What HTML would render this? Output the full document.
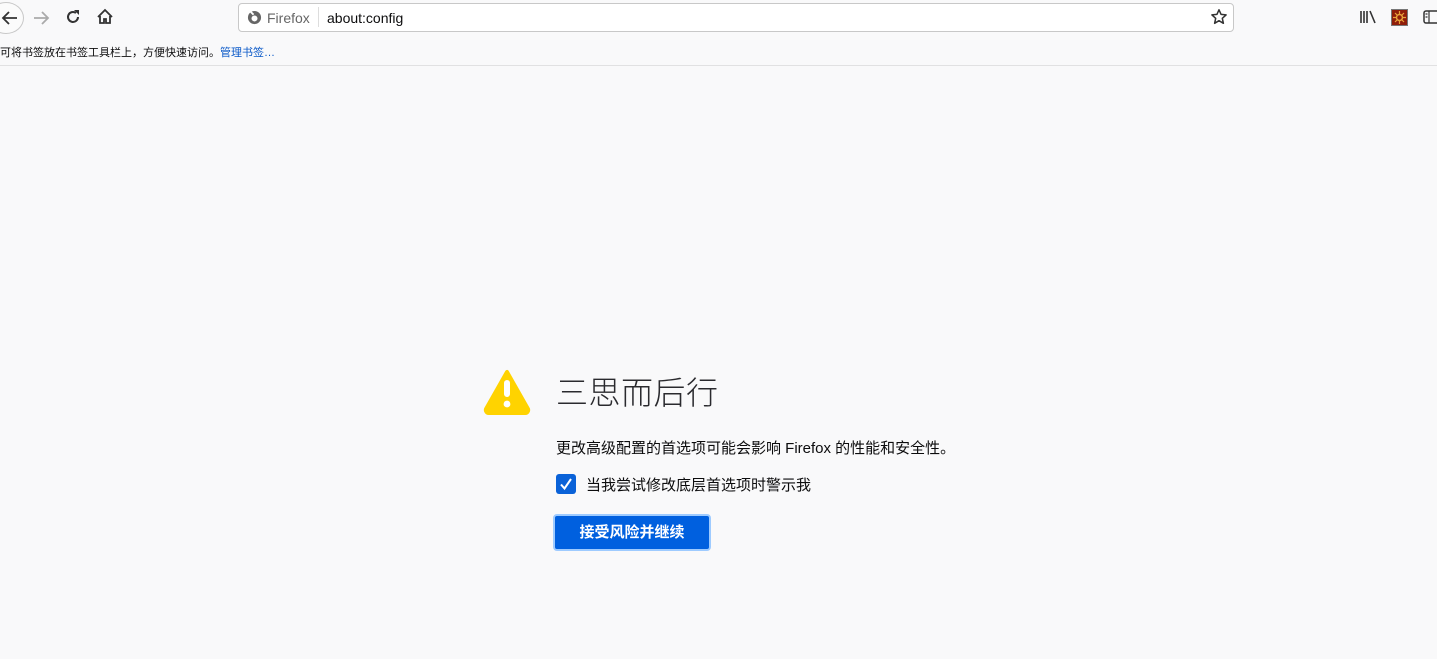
<!DOCTYPE html>
<html><head><meta charset="utf-8"><style>
body{margin:0;width:1437px;height:659px;background:#f9f9fa;font-family:"Liberation Sans","Noto Sans CJK SC",sans-serif;position:relative;overflow:hidden;color:#0c0c0d}
.a{position:absolute}
</style></head><body>
<div class="a" style="left:0;top:0;width:1437px;height:65px;background:#f9f9fa;border-bottom:1px solid #e1e1e2"></div>
<div class="a" style="left:-12px;top:2px;width:34px;height:30px;border:1px solid #c8c8c8;border-radius:50%;background:#fbfbfb"></div>
<svg class="a" style="left:0;top:8px" width="20" height="20" viewBox="0 0 20 20"><path d="M17 10H3M9 4L3 10l6 6" fill="none" stroke="#333" stroke-width="1.8"/></svg>
<svg class="a" style="left:32px;top:8px" width="20" height="20" viewBox="0 0 20 20"><path d="M2 10h14M10 4l6 6-6 6" fill="none" stroke="#aaa" stroke-width="1.8"/></svg>
<svg class="a" style="left:64px;top:8px" width="18" height="18" viewBox="0 0 18 18"><path d="M14 9a5 5 0 1 1-2-4" fill="none" stroke="#333" stroke-width="2"/><path d="M10 2h5v5z" fill="#333"/></svg>
<svg class="a" style="left:96px;top:8px" width="18" height="18" viewBox="0 0 18 18"><path d="M2 9L9 2l7 7M4 8v7h4v-4h2v4h4V8" fill="none" stroke="#333" stroke-width="1.8"/></svg>
<div class="a" style="left:238px;top:3px;width:994px;height:27px;background:#fff;border:1px solid #c8c8c8;border-radius:4px"></div>
<svg class="a" style="left:247px;top:10px" width="15" height="15" viewBox="0 0 16 16"><circle cx="8" cy="8" r="7" fill="#666"/><circle cx="8" cy="9" r="3.2" fill="#fff"/><path d="M4 2l3 3" stroke="#fff" stroke-width="2"/></svg>
<div class="a" style="left:267px;top:10px;font-size:14px;color:#666">Firefox</div>
<div class="a" style="left:318px;top:7px;width:1px;height:20px;background:#ddd"></div>
<div class="a" style="left:327px;top:10px;font-size:14px">about:config</div>
<svg class="a" style="left:1210px;top:8px" width="18" height="18" viewBox="0 0 18 18"><path d="M9 1.8l2.1 4.6 5 .5-3.8 3.4 1.1 5L9 12.7l-4.4 2.6 1.1-5L1.9 6.9l5-.5z" fill="none" stroke="#333" stroke-width="1.5" stroke-linejoin="round"/></svg>
<svg class="a" style="left:1359px;top:9px" width="18" height="16" viewBox="0 0 18 16"><path d="M2 2v12M5 2v12M8 2v12M11 2l5 12" stroke="#333" stroke-width="1.6"/></svg>
<div class="a" style="left:1391px;top:9px;width:15px;height:15px;background:#8f1d0a;border:1px solid #777"></div>
<svg class="a" style="left:1392px;top:10px" width="15" height="15" viewBox="0 0 15 15"><circle cx="7.5" cy="7.5" r="3" fill="none" stroke="#e8a23a" stroke-width="1.5"/><path d="M7.5 1v3M7.5 11v3M1 7.5h3M11 7.5h3M3 3l2 2M10 10l2 2M3 12l2-2M10 5l2-2" stroke="#e8a23a" stroke-width="1.2"/></svg>
<svg class="a" style="left:1423px;top:9px" width="14" height="16" viewBox="0 0 14 16"><rect x="1" y="2" width="16" height="12" rx="2" fill="none" stroke="#333" stroke-width="1.5"/><path d="M6 2v12M2.5 5h2M2.5 8h2" stroke="#333" stroke-width="1.2"/></svg>
<div class="a" style="left:0;top:44px;font-size:11px;color:#0c0c0d;white-space:nowrap">可将书签放在书签工具栏上，方便快速访问。<span style="color:#0a59c8">管理书签…</span></div>
<svg class="a" style="left:483px;top:369px" width="48" height="46" viewBox="0 0 48 46"><path d="M24 3L3 40a3 3 0 0 0 3 4h36a3 3 0 0 0 3-4z" fill="#ffd300" stroke="#ffd300" stroke-width="4" stroke-linejoin="round"/><rect x="21" y="11" width="6" height="17" rx="3" fill="#fff"/><circle cx="24" cy="35" r="3.4" fill="#fff"/></svg>
<div class="a" style="left:556px;top:368px;font-size:32px;font-weight:300;color:#2a2a2e;letter-spacing:0.5px">三思而后行</div>
<div class="a" style="left:556px;top:437px;font-size:15px;white-space:nowrap">更改高级配置的首选项可能会影响 Firefox 的性能和安全性。</div>
<div class="a" style="left:556px;top:474px;width:20px;height:20px;background:#0a62d8;border-radius:3px"></div>
<svg class="a" style="left:556px;top:474px" width="20" height="20" viewBox="0 0 20 20"><path d="M5 10.5l3.5 4L15 5" fill="none" stroke="#fff" stroke-width="2"/></svg>
<div class="a" style="left:586px;top:474px;font-size:15px;white-space:nowrap">当我尝试修改底层首选项时警示我</div>
<div class="a" style="left:553px;top:514px;width:154px;height:33px;background:#0060df;border:2px solid #9ecbff;border-radius:4px;color:#fff;font-size:15px;font-weight:bold;text-align:center;line-height:33px">接受风险并继续</div>
</body></html>
